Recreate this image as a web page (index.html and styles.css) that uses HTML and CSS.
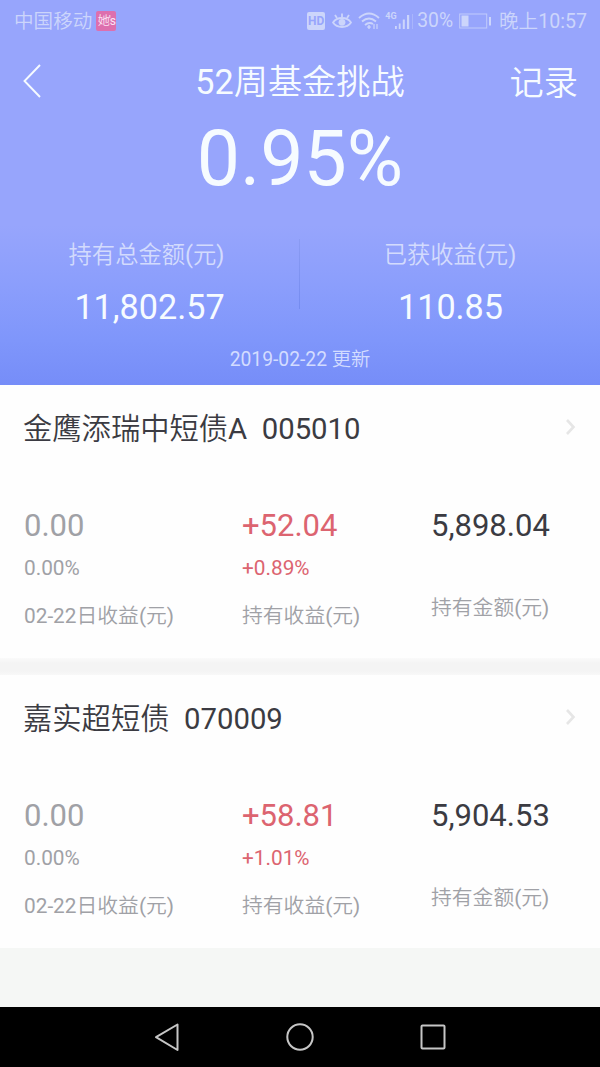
FILE: index.html
```
<!DOCTYPE html>
<html lang="zh-CN">
<head>
    <meta charset="UTF-8">
    <meta name="viewport" content="width=device-width, initial-scale=1.0">
    <title>52周基金挑战</title>
    <link rel="stylesheet" href="styles.css">
</head>
<body>
    <div class="header">
        <div class="status-bar">
            <span class="carrier">中国移动</span>
            <span class="badge">她's</span>
            <div class="status-icons">
                <span class="hd">HD</span>
                <svg class="eye" width="20" height="18" viewBox="0 0 20 18" fill="none" stroke="currentColor" stroke-width="1.8">
                    <path d="M1 10.5C5 4.5 15 4.5 19 10.5C15 16.5 5 16.5 1 10.5Z"/>
                    <circle cx="10" cy="10.3" r="3.4" fill="currentColor" stroke="none"/>
                    <path d="M10 5V1.5M5 6L3 3M15 6L17 3"/>
                </svg>
                <svg class="wifi" width="22" height="18" viewBox="0 0 22 18" fill="none" stroke="currentColor" stroke-width="1.9">
                    <path d="M1 6Q11 -3 21 6M4 9.5Q11 3.5 18 9.5M7 13Q11 9.5 15 12"/>
                    <path d="M11 13V17M9.3 15H12.7" stroke-width="1.4"/>
                    <path d="M16 12V17M19 12V17" stroke-width="1.2"/>
                </svg>
                <span class="net">4G</span>
                <svg class="signal" width="18" height="18" viewBox="0 0 18 18" fill="currentColor">
                    <rect x="0" y="14" width="1.8" height="3"/>
                    <rect x="3.8" y="11.5" width="1.8" height="5.5"/>
                    <rect x="7.8" y="7.5" width="2" height="9.5"/>
                    <rect x="12" y="3" width="2.2" height="14"/>
                    <rect x="17" y="2" width="1" height="15" opacity="0.35"/>
                </svg>
                <span class="percent">30%</span>
                <svg class="battery" width="33" height="18" viewBox="0 0 33 18" fill="none" stroke="currentColor">
                    <rect x="0.7" y="2" width="27" height="14" stroke-width="1" opacity="0.8"/>
                    <rect x="2.5" y="3.5" width="7" height="11" fill="currentColor" stroke="none"/>
                    <path d="M31 5V13.5" stroke-width="2"/>
                </svg>
                <span class="time">晚上10:57</span>
            </div>
        </div>

        <div class="title-bar">
            <svg class="back" width="20" height="36" viewBox="0 0 20 36" fill="none" stroke="currentColor" stroke-width="1.9">
                <path d="M17 2L1.5 18L17 34"/>
            </svg>
            <h1>52周基金挑战</h1>
            <span class="record">记录</span>
        </div>

        <div class="rate">0.95%</div>

        <div class="totals">
            <div class="total">
                <p class="total-label">持有总金额(元)</p>
                <p class="total-value">11,802.57</p>
            </div>
            <div class="total">
                <p class="total-label">已获收益(元)</p>
                <p class="total-value">110.85</p>
            </div>
        </div>

        <p class="updated">2019-02-22 更新</p>
    </div>

    <div class="fund-list">
        <div class="fund">
            <div class="fund-head">
                <h2>金鹰添瑞中短债A&nbsp; 005010</h2>
                <svg width="10" height="18" viewBox="0 0 10 18" fill="none" stroke="currentColor" stroke-width="2.6">
                    <path d="M1 2L7.5 9L1 16"/>
                </svg>
            </div>
            <div class="fund-data">
                <div class="col muted">
                    <p class="amount">0.00</p>
                    <p class="pct">0.00%</p>
                    <p class="label">02-22日收益(元)</p>
                </div>
                <div class="col gain">
                    <p class="amount">+52.04</p>
                    <p class="pct">+0.89%</p>
                    <p class="label">持有收益(元)</p>
                </div>
                <div class="col hold">
                    <p class="amount">5,898.04</p>
                    <p class="label">持有金额(元)</p>
                </div>
            </div>
        </div>

        <div class="divider"></div>

        <div class="fund">
            <div class="fund-head">
                <h2>嘉实超短债&nbsp; 070009</h2>
                <svg width="10" height="18" viewBox="0 0 10 18" fill="none" stroke="currentColor" stroke-width="2.6">
                    <path d="M1 2L7.5 9L1 16"/>
                </svg>
            </div>
            <div class="fund-data">
                <div class="col muted">
                    <p class="amount">0.00</p>
                    <p class="pct">0.00%</p>
                    <p class="label">02-22日收益(元)</p>
                </div>
                <div class="col gain">
                    <p class="amount">+58.81</p>
                    <p class="pct">+1.01%</p>
                    <p class="label">持有收益(元)</p>
                </div>
                <div class="col hold">
                    <p class="amount">5,904.53</p>
                    <p class="label">持有金额(元)</p>
                </div>
            </div>
        </div>
    </div>

    <div class="nav-bar">
        <svg width="28" height="30" viewBox="0 0 28 30" fill="none" stroke="currentColor" stroke-width="2" stroke-linejoin="round">
            <path d="M24.5 2.5V28L3 15.2Z"/>
        </svg>
        <svg width="28" height="30" viewBox="0 0 28 30" fill="none" stroke="currentColor" stroke-width="2">
            <circle cx="14" cy="15" r="12.7"/>
        </svg>
        <svg width="28" height="30" viewBox="0 0 28 30" fill="none" stroke="currentColor" stroke-width="2">
            <rect x="2.5" y="3.5" width="23" height="23" rx="1"/>
        </svg>
    </div>
</body>
</html>
```
FILE: styles.css
```
* {
    margin: 0;
    padding: 0;
    box-sizing: border-box;
}

body {
    width: 600px;
    height: 1067px;
    display: flex;
    flex-direction: column;
    overflow: hidden;
    background: #f5f7f5;
    font-family: Roboto, "Noto Sans CJK SC DemiLight", "Noto Sans CJK SC", sans-serif;
    white-space: nowrap;
}

h1, h2 {
    font-weight: 400;
}

svg {
    display: block;
    flex: none;
}

.header {
    height: 385px;
    color: #f6fbff;
    background: linear-gradient(180deg, #97a5fc 0, #97a5fc 225px, #8b9efc 285px, #7f96fb 340px, #768df8 100%);
}

/* status bar */
.status-bar {
    display: flex;
    align-items: center;
    height: 41px;
    padding: 1px 13px 0 14px;
    font-size: 19.6px;
    line-height: 40px;
    color: #ccd5fb;
}

.carrier,
.time {
    padding-top: 2px;
}

.badge {
    width: 20px;
    height: 20px;
    margin-left: 4px;
    border-radius: 2px;
    background: #dd6fae;
    color: #fbe3f5;
    font-size: 12px;
    line-height: 20px;
    text-align: center;
    letter-spacing: -1px;
}

.status-icons {
    display: flex;
    align-items: center;
    margin-left: auto;
}

.hd {
    width: 18px;
    height: 18px;
    border-radius: 2px;
    background: #ccd5fb;
    color: #97a5fc;
    font-size: 12px;
    font-weight: 700;
    line-height: 18px;
    text-align: center;
}

.eye {
    margin-left: 7px;
}

.wifi {
    margin-left: 6px;
}

.net {
    width: 10px;
    margin: -11px 0 0 5px;
    font-size: 9px;
    font-weight: 700;
    line-height: 10px;
}

.signal {
    margin-right: 4px;
}

.percent {
    font-size: 19.3px;
}

.battery {
    margin: 0 7px 0 6px;
}

/* title */
.title-bar {
    display: grid;
    grid-template-columns: 120px 1fr 120px;
    align-items: center;
    height: 82px;
    padding: 0 22px 0 23px;
    font-size: 34.2px;
    line-height: 82px;
}

.title-bar h1 {
    padding-right: 1px;
    font-size: 34.2px;
    line-height: 82px;
    text-align: center;
}

.back {
    margin-top: -2px;
}

.record {
    padding-top: 2px;
    line-height: 80px;
    text-align: right;
}

.rate {
    height: 74px;
    font-size: 77px;
    line-height: 73px;
    text-align: center;
}

/* totals */
.totals {
    display: grid;
    grid-template-columns: 1fr 1fr;
    height: 89px;
    margin-top: 42px;
    background: linear-gradient(#8a9bf2, #748bf0) 299px top / 1px 70px no-repeat;
}

.total {
    text-align: center;
}

.total:first-child {
    padding-right: 7px;
}

.total-label {
    height: 30px;
    padding-top: 1px;
    font-size: 23.3px;
    line-height: 30px;
    color: #d3dbfd;
}

.total-value {
    margin-top: 18px;
    padding-left: 6px;
    font-size: 34.2px;
    line-height: 40px;
}

.total:last-child .total-value {
    padding-left: 1px;
}

.updated {
    margin-top: 17px;
    font-size: 19.3px;
    line-height: 30px;
    text-align: center;
    color: #d3dcff;
}

/* funds */
.fund-list {
    flex: 1;
}

.fund {
    height: 273px;
    background: #fefefe;
}

.divider {
    height: 17px;
    background: linear-gradient(#fafafa, #f4f4f4 5px, #f4f4f4 13px, #f8f8f8);
}

.fund-head {
    display: flex;
    align-items: center;
    justify-content: space-between;
    height: 86px;
    padding: 0 24px 0 23px;
    color: #e6e6e6;
}

.fund-head svg {
    margin-top: -2px;
}

.fund-head h2 {
    padding-top: 1px;
    font-size: 29.3px;
    line-height: 86px;
    color: #3b3b42;
}

.fund-data {
    display: grid;
    grid-template-columns: 218px 189px 1fr;
    padding: 35px 0 0 24px;
    color: #a0a1a6;
}

.amount {
    font-size: 31px;
    line-height: 40px;
}

.pct {
    margin-top: 7px;
    font-size: 20.8px;
    line-height: 30px;
}

.label {
    margin-top: 18px;
    font-size: 20.8px;
    line-height: 30px;
}

.gain .amount,
.gain .pct {
    color: #dc6470;
}

.hold .amount {
    color: #3b3b42;
}

.hold .label {
    margin-top: 47px;
}

/* system navigation */
.nav-bar {
    display: flex;
    justify-content: center;
    align-items: center;
    gap: 105px;
    height: 60px;
    background: #000;
    color: #c6c6c6;
}
```
